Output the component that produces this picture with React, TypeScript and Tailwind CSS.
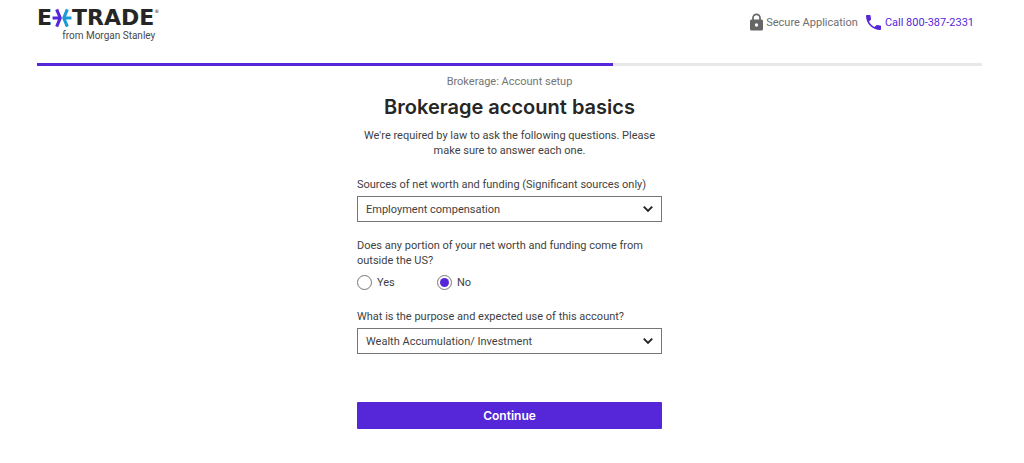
import { useState } from "react";

const SOURCES = ["Employment compensation", "Inheritance", "Investments", "Retirement assets"];
const PURPOSES = ["Wealth Accumulation/ Investment", "Income generation", "Retirement savings"];

export default function App() {
  const [source, setSource] = useState(SOURCES[0]);
  const [purpose, setPurpose] = useState(PURPOSES[0]);
  const [outsideUs, setOutsideUs] = useState("No");

  return (
    <div className="min-h-screen bg-white pr-[42px] pb-8 pl-[37px] font-['Roboto',sans-serif] text-[11px] leading-[15px] text-[#3f3f3f]">
      <header className="flex items-start justify-between pt-2 pb-5">
        <Logo />
        <div className="flex items-center gap-2 pt-[5px] pr-2">
          <div className="flex items-center gap-[3px] text-[#6e6e6e]">
            <LockIcon />
            <span>Secure Application</span>
          </div>
          <a href="tel:8003872331" className="flex items-center gap-1 text-[#5627d8]">
            <PhoneIcon />
            <span>Call 800-387-2331</span>
          </a>
        </div>
      </header>

      {/* Progress */}
      <div className="h-[3px] bg-[#e8e8e8]">
        <div className="h-full w-[61%] bg-[#5627d8]" />
      </div>

      <main className="mx-auto w-full max-w-[305px]">
        <div className="text-center">
          <p className="mt-2 leading-4 text-[#757575]">Brokerage: Account setup</p>
          <h1 className="font-['Inter',sans-serif] text-[20px] leading-[34px] font-semibold whitespace-nowrap text-[#262626]">Brokerage account basics</h1>
          <p className="mt-1">We're required by law to ask the following questions. Please make sure to answer each one.</p>
        </div>

        <form onSubmit={(e) => e.preventDefault()}>
          <SelectField
            id="source"
            label="Sources of net worth and funding (Significant sources only)"
            options={SOURCES}
            value={source}
            onChange={setSource}
          />

          <fieldset className="mt-4">
            <legend>Does any portion of your net worth and funding come from outside the US?</legend>
            <div className="mt-[6px] flex">
              {["Yes", "No"].map((option) => (
                <label key={option} className="flex h-4 w-20 items-center gap-[5px]">
                  <input
                    type="radio"
                    name="outside-us"
                    value={option}
                    checked={outsideUs === option}
                    onChange={() => setOutsideUs(option)}
                    className="grid size-[15px] appearance-none place-content-center rounded-full border border-[#767676] bg-white before:size-[9px] before:rounded-full checked:before:bg-[#5627d8]"
                  />
                  <span>{option}</span>
                </label>
              ))}
            </div>
          </fieldset>

          <SelectField
            id="purpose"
            label="What is the purpose and expected use of this account?"
            options={PURPOSES}
            value={purpose}
            onChange={setPurpose}
          />

          <button type="submit" className="mt-12 h-[27px] w-full rounded-[1px] bg-[#5627d8] font-['Inter',sans-serif] text-[12px] font-semibold text-white">
            Continue
          </button>
        </form>
      </main>
    </div>
  );
}

type SelectFieldProps = {
  id: string;
  label: string;
  options: string[];
  value: string;
  onChange: (value: string) => void;
};

function SelectField({ id, label, options, value, onChange }: SelectFieldProps) {
  return (
    <div className="mt-[19px]">
      <label htmlFor={id} className="block whitespace-nowrap">
        {label}
      </label>
      <div className="relative mt-1">
        <select
          id={id}
          value={value}
          onChange={(e) => onChange(e.target.value)}
          className="block h-[26px] w-full appearance-none border border-[#767676] bg-white pr-8 pl-2"
        >
          {options.map((option) => (
            <option key={option}>{option}</option>
          ))}
        </select>
        <svg viewBox="0 0 12 8" className="pointer-events-none absolute top-1/2 right-2 h-2 w-3 -translate-y-1/2" fill="none" stroke="#262626" strokeWidth="2">
          <path d="M1.800 1.600 6 5.900l4.200-4.300" />
        </svg>
      </div>
    </div>
  );
}

function Logo() {
  return (
    <div className="flex flex-col items-end text-[#262626]">
      <div className="flex items-center font-['DejaVu_Sans',sans-serif] text-[22px] leading-[18px] font-bold">
        <span>E</span>
        <svg viewBox="0 0 18 18" className="size-5" fill="none" strokeWidth="2.8">
          <path stroke="#5627d8" d="M.5 9H7.500M4.200 1.200 7.400 9 4.200 16.800" />
          <path stroke="#1c9ad6" d="M17.500 9H10.500M13.800 1.200 10.600 9l3.200 7.800" />
        </svg>
        <span>TRADE</span>
        <span className="self-start text-[5px] leading-[6px] font-normal">®</span>
      </div>
      <div className="pr-1 font-['Roboto',sans-serif] text-[10px] leading-[15px] text-[#4a4a4a]">from Morgan Stanley</div>
    </div>
  );
}

function LockIcon() {
  return (
    <svg viewBox="0 0 13 18" className="h-[18px] w-[13px]">
      <path d="M3 7V4.800a3.500 3.500 0 0 1 7 0V7" fill="none" stroke="#666" strokeWidth="1.700" />
      <path fillRule="evenodd" fill="#666" d="M1.500 6.500h10A1.500 1.500 0 0 1 13 8v8a1.500 1.500 0 0 1-1.500 1.500h-10A1.500 1.500 0 0 1 0 16V8a1.500 1.500 0 0 1 1.500-1.500zM6.500 10.300a1.700 1.700 0 1 0 0 3.400 1.700 1.700 0 0 0 0-3.400z" />
    </svg>
  );
}

function PhoneIcon() {
  return (
    <svg viewBox="3 3 18 18" className="size-[15px]" fill="#5627d8">
      <path d="M6.620 10.790c1.440 2.830 3.760 5.140 6.590 6.590l2.200-2.200c.27-.27.67-.36 1.020-.24 1.120.37 2.330.57 3.570.57.55 0 1 .45 1 1V20c0 .55-.45 1-1 1-9.390 0-17-7.610-17-17 0-.55.45-1 1-1h3.500c.55 0 1 .45 1 1 0 1.250.2 2.450.57 3.570.11.35.03.74-.25 1.020z" />
    </svg>
  );
}
